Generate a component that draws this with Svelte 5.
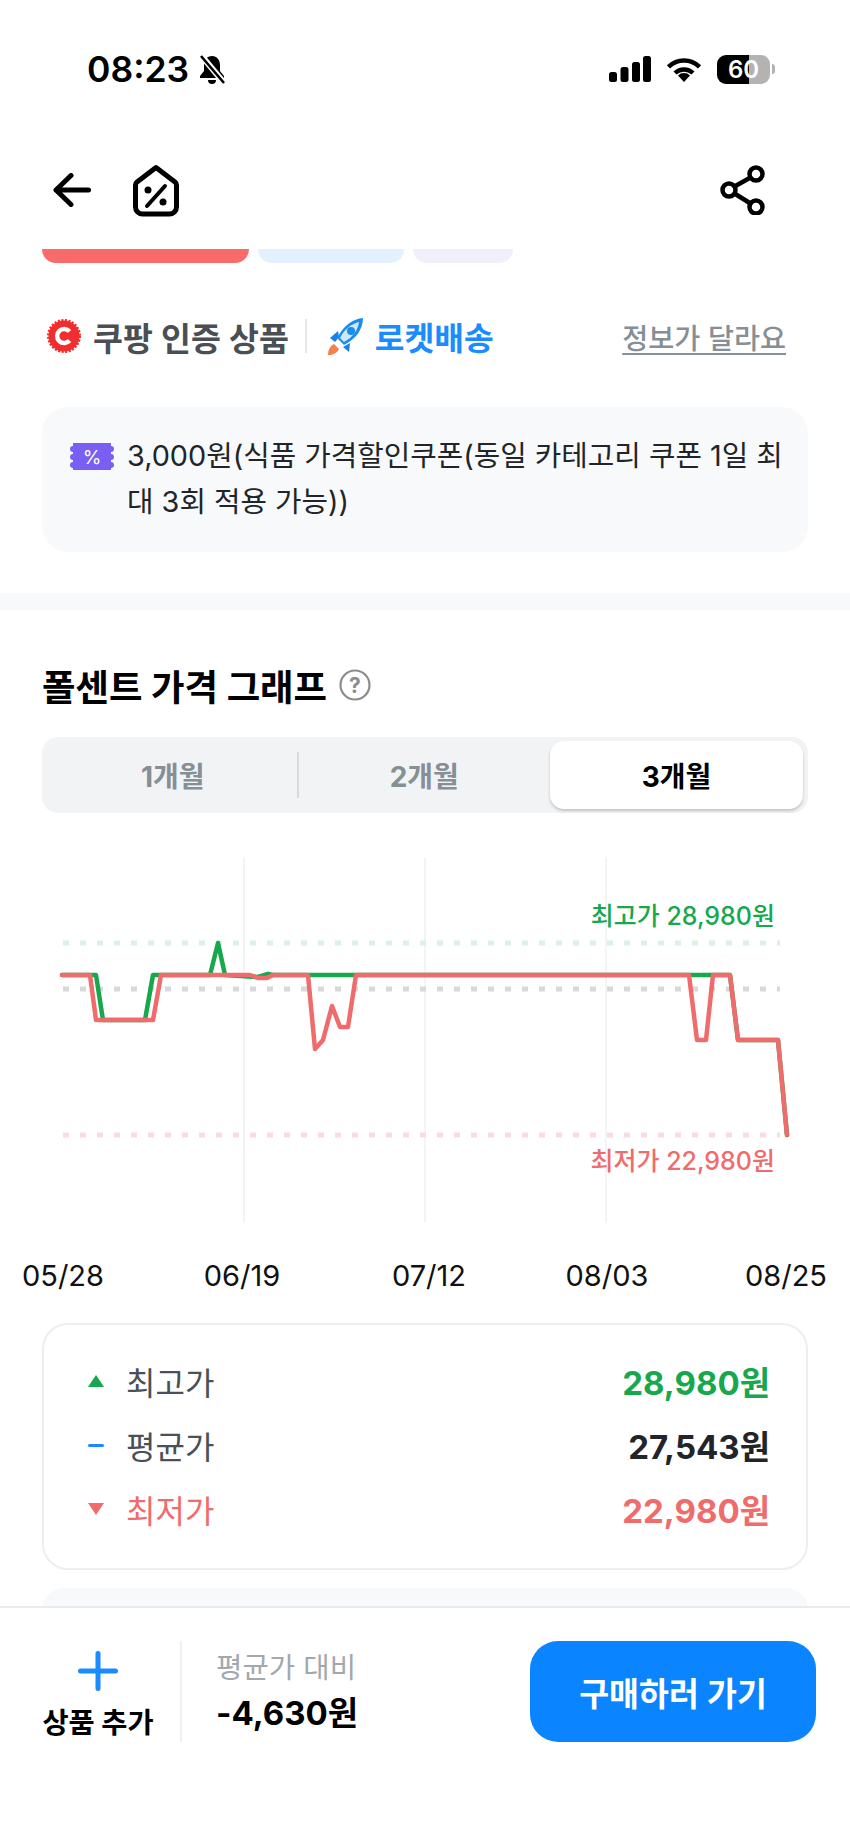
<script lang="ts">
	const labels = [
		{ x: 63, text: '05/28' },
		{ x: 242, text: '06/19' },
		{ x: 429, text: '07/12' },
		{ x: 607, text: '08/03' },
		{ x: 786, text: '08/25' }
	];
	const gridX = [244, 425, 606];
	const guides = [
		{ y: 943, color: '#dcf1e5' },
		{ y: 989, color: '#d9d9d9' },
		{ y: 1135, color: '#fbdcdc' }
	];
	const TOP = 857; // page y of the svg's top edge, so data can stay in page coords
	const high =
		'62,975 96,975 103,1020 145,1020 153,975 210,975 218,943 225,975 258,977 268,974 273,975 689,975 713,975 730,975 738,1040 778,1040 787,1135';
	const low =
		'62,975 90,975 96,1020 153,1020 161,975 250,975 258,978 267,978 273,975 308,975 315,1049 323,1040 332,1006 340,1027 348,1027 356,975 689,975 697,1040 706,1040 713,975 730,975 738,1040 778,1040 787,1135';

	const stats = [
		{ label: '최고가', value: '28,980원', kind: 'up' },
		{ label: '평균가', value: '27,543원', kind: 'avg' },
		{ label: '최저가', value: '22,980원', kind: 'down' }
	];
	const periods = ['1개월', '2개월', '3개월'];
</script>

<div class="screen">
	<div class="status">
		<div class="clock">
			<span>08:23</span>
			<svg class="bell" viewBox="0 0 30 32" width="30" height="32">
				<path d="M15 3c-5 0-8 4-8 9v6l-4 5v2h24v-2l-4-5v-6c0-5-3-9-8-9z" fill="#000" />
				<path d="M11 27a4 4 0 0 0 8 0z" fill="#000" />
				<path d="M3 1l25 30" stroke="#fff" stroke-width="6" />
				<path d="M4 3l23 27" stroke="#000" stroke-width="2.6" />
			</svg>
		</div>
		<div class="sys">
			<svg viewBox="0 0 42 26" width="42" height="26">
				<rect x="0" y="16" width="8" height="10" rx="2.5" />
				<rect x="11.500" y="11" width="8" height="15" rx="2.5" />
				<rect x="23" y="6" width="8" height="20" rx="2.5" />
				<rect x="34" y="0" width="8" height="26" rx="2.5" />
			</svg>
			<svg viewBox="0 0 34 25" width="34" height="25">
				<path d="M17 25l-6-6.500a8.500 8.500 0 0 1 12 0z" />
				<path d="M1.500 10a22 22 0 0 1 31 0" fill="none" stroke="#000" stroke-width="4.500" />
				<path d="M8 16a13 13 0 0 1 18 0" fill="none" stroke="#000" stroke-width="4.500" />
			</svg>
			<div class="battery">
				<div class="cell"><span>60</span></div>
				<i></i>
			</div>
		</div>
	</div>

	<div class="nav">
		<div class="nav-left">
			<svg viewBox="0 0 38 34" width="38" height="34" fill="none" stroke="#000" stroke-width="5" stroke-linecap="round" stroke-linejoin="round">
				<path d="M35.500 17H3M18 2.500L3 17l15 14.500" />
			</svg>
			<svg viewBox="0 0 50 54" width="50" height="54" fill="none" stroke="#000" stroke-width="5" stroke-linejoin="round" stroke-linecap="round">
				<path d="M25 4.500L6 19a4 4 0 0 0-1.500 3v22a7 7 0 0 0 7 7h27a7 7 0 0 0 7-7V22a4 4 0 0 0-1.500-3z" />
				<path d="M34 23L16 43" stroke-width="4" />
				<circle cx="17" cy="27" r="3.500" fill="#000" stroke="none" />
				<circle cx="32" cy="39" r="3.500" fill="#000" stroke="none" />
			</svg>
		</div>
		<svg viewBox="0 0 46 50" width="46" height="50" fill="none" stroke="#000" stroke-width="4.500">
			<circle cx="36" cy="9" r="6.500" />
			<circle cx="9" cy="25" r="6.500" />
			<circle cx="36" cy="42" r="6.500" />
			<path d="M30.500 12.500L14.500 21.500M14.500 28.500l16 10" />
		</svg>
	</div>

	<div class="scroll">
		<div class="bars">
			<div class="bar red"></div>
			<div class="bar blue"></div>
			<div class="bar violet"></div>
		</div>

		<div class="badges">
			<svg class="stamp" viewBox="0 0 34 34" width="34" height="34">
				<circle cx="17" cy="17" r="15.500" fill="#f22d2d" stroke="#f22d2d" stroke-width="3" stroke-dasharray="2 1.500" />
				<path d="M22.500 12.500a7 7 0 1 0 0 9" fill="none" stroke="#fff" stroke-width="4.500" />
			</svg>
			<span class="cert">쿠팡 인증 상품</span>
			<span class="vr"></span>
			<svg class="rocket" viewBox="0 0 37 38" width="37" height="38">
				<path d="M6 27C2 29 0 33 0 38c5 0 9-2 11-6z" fill="#f5814f" />
				<path d="M10 14L2 21l5 4 4-5zM22 26l-1 9-6-5z" fill="#1a7fe8" />
				<path d="M35 1C25 2 16 8 9 21l7 7c12-6 19-16 19-27z" fill="#1a8cf0" />
				<path d="M31 5c-7 2-14 6-19 16l4 4c9-5 14-12 15-20z" fill="#cfe7fb" />
				<circle cx="23" cy="14" r="4" fill="#1a8cf0" />
			</svg>
			<span class="rocket-text">로켓배송</span>
			<span class="report">정보가 달라요</span>
		</div>

		<div class="coupon">
			<svg class="ticket" viewBox="0 0 44 27" width="44" height="27">
				<path d="M3 0H41V3a3 3 0 0 1 0 6v2a3 3 0 0 1 0 6v2a3 3 0 0 1 0 6v2H3v-2a3 3 0 0 1 0-6v-2a3 3 0 0 1 0-6V9a3 3 0 0 1 0-6z" fill="#7a5ff5" />
				<text x="22" y="20.500" text-anchor="middle" fill="#fff" font-size="19" font-family="Inter, sans-serif">%</text>
			</svg>
			<p>3,000원(식품 가격할인쿠폰(동일 카테고리 쿠폰 1일 최대 3회 적용 가능))</p>
		</div>

		<div class="band"></div>

		<h2>
			폴센트 가격 그래프
			<svg viewBox="0 0 32 32" width="32" height="32">
				<circle cx="16" cy="16" r="14.500" fill="none" stroke="#8c8c8c" stroke-width="2.200" />
				<text x="16" y="23.500" text-anchor="middle" fill="#8c8c8c" font-size="21" font-family="Inter, sans-serif">?</text>
			</svg>
		</h2>

		<div class="segments">
			{#each periods as p, i}
				<div class="seg" class:on={i === 2} class:sep={i === 0}>{p}</div>
			{/each}
		</div>

		<svg class="chart" viewBox="0 {TOP} 850 436" width="850" height="436">
			{#each gridX as x}
				<line x1={x} x2={x} y1={TOP} y2="1223" stroke="#f3f4f6" stroke-width="2" />
			{/each}
			{#each guides as g}
				<line x1="63" x2="780" y1={g.y} y2={g.y} stroke={g.color} stroke-width="5" stroke-dasharray="6 11" />
			{/each}
			<polyline points={high} fill="none" stroke="#17a84d" stroke-width="4.500" stroke-linejoin="round" stroke-linecap="round" />
			<polyline points={low} fill="none" stroke="#f06b6b" stroke-width="4.500" stroke-linejoin="round" stroke-linecap="round" />
			<text class="tag green" x="775" y="925" text-anchor="end">최고가 28,980원</text>
			<text class="tag coral" x="775" y="1170" text-anchor="end">최저가 22,980원</text>
			{#each labels as l}
				<text class="tick" x={l.x} y="1286" text-anchor="middle">{l.text}</text>
			{/each}
		</svg>

		<div class="stats">
			{#each stats as s}
				<div class="stat {s.kind}">
					<i class="mark"></i>
					<span class="name">{s.label}</span>
					<b>{s.value}</b>
				</div>
			{/each}
		</div>

		<div class="next"></div>
	</div>

	<div class="footer">
		<div class="add">
			<svg viewBox="0 0 40 40" width="40" height="40">
				<path d="M20 2.500v35M2.500 20h35" stroke="#1a8cff" stroke-width="5" stroke-linecap="round" />
			</svg>
			<span>상품 추가</span>
		</div>
		<div class="compare">
			<span>평균가 대비</span>
			<b>-4,630원</b>
		</div>
		<button>구매하러 가기</button>
	</div>
</div>

<style>
	:global(body) {
		margin: 0;
		background: #fff;
	}
	.screen {
		width: 850px;
		height: 1848px;
		display: flex;
		flex-direction: column;
		overflow: hidden;
		color: #000;
		font-family: Inter, 'Noto Sans CJK KR', sans-serif;
	}

	.status {
		height: 54px;
		padding: 42px 75px 0 87px;
		display: flex;
		justify-content: space-between;
		align-items: center;
	}
	.clock {
		display: flex;
		align-items: center;
		gap: 8px;
		font-size: 35.5px;
		font-weight: 600;
	}
	.sys {
		display: flex;
		align-items: center;
		gap: 16px;
	}
	.battery {
		display: flex;
		align-items: center;
		gap: 2px;
	}
	.cell {
		width: 53px;
		height: 29px;
		border-radius: 9px;
		background: linear-gradient(90deg, #000 60%, #b3b3b3 60%);
		color: #fff;
		font-size: 24px;
		font-weight: 600;
		line-height: 29px;
		text-align: center;
	}
	.battery i {
		width: 3px;
		height: 10px;
		border-radius: 0 3px 3px 0;
		background: #b3b3b3;
	}

	.nav {
		height: 54px;
		padding: 67px 84px 0 53px;
		display: flex;
		justify-content: space-between;
		align-items: center;
	}
	.nav-left {
		display: flex;
		align-items: center;
		gap: 40px;
	}

	.scroll {
		flex: 1;
		min-height: 0;
		overflow: hidden;
		margin-top: 32px;
	}
	.bars {
		height: 14px;
		padding: 0 42px;
		display: flex;
		gap: 9px;
	}
	.bar {
		border-radius: 0 0 14px 14px;
	}
	.red {
		width: 207px;
		background: #f96a6a;
	}
	.blue {
		width: 146px;
		background: #e3f1fe;
	}
	.violet {
		width: 100px;
		background: #f1effc;
	}

	.badges {
		margin-top: 53px;
		height: 40px;
		padding: 0 64px 0 47px;
		display: flex;
		align-items: center;
	}
	.cert {
		margin-left: 12px;
		font-size: 32.5px;
		font-weight: 600;
		color: #4a4f55;
	}
	.vr {
		width: 2px;
		height: 34px;
		margin: 0 21px 0 16px;
		background: #e6e8ea;
	}
	.rocket-text {
		margin-left: 10px;
		font-size: 32.3px;
		font-weight: 700;
		color: #1a8cff;
	}
	.report {
		margin-left: auto;
		font-size: 28.3px;
		font-weight: 500;
		color: #868e96;
		text-decoration: underline;
		text-underline-offset: 4px;
	}

	.coupon {
		margin: 51px 42px 0;
		height: 145px;
		box-sizing: border-box;
		padding: 26px 24px 0 28px;
		display: flex;
		gap: 13px;
		align-items: flex-start;
		background: #f8f9fa;
		border-radius: 26px;
	}
	.ticket {
		flex: none;
		margin-top: 10px;
	}
	.coupon p {
		margin: 0;
		font-size: 28.8px;
		line-height: 46px;
		color: #212529;
	}

	.band {
		margin-top: 41px;
		height: 17px;
		background: #f8f9fa;
	}

	h2 {
		margin: 52px 42px 0;
		height: 46px;
		display: flex;
		align-items: center;
		gap: 12px;
		font-size: 36.4px;
		font-weight: 700;
	}

	.segments {
		margin: 29px 42px 0;
		height: 76px;
		box-sizing: border-box;
		padding: 4px 5px;
		display: grid;
		grid-template-columns: 1fr 1fr 253px;
		background: #f1f3f5;
		border-radius: 16px;
	}
	.seg {
		position: relative;
		display: flex;
		align-items: center;
		justify-content: center;
		font-size: 28px;
		font-weight: 700;
		color: #868e96;
	}
	.sep::after {
		content: '';
		position: absolute;
		right: 0;
		top: 11px;
		bottom: 11px;
		width: 2px;
		background: #d6d9dd;
	}
	.on {
		color: #000;
		background: #fff;
		border-radius: 14px;
		box-shadow: 0 2px 3px rgba(0, 0, 0, 0.2);
	}

	.chart {
		display: block;
		margin-top: 44px;
	}
	.tag {
		font-size: 25px;
		font-weight: 500;
	}
	.green {
		fill: #17a84d;
	}
	.coral {
		fill: #f06b6b;
	}
	.tick {
		font-size: 29px;
		fill: #111;
	}

	.stats {
		margin: 30px 42px 0;
		height: 247px;
		box-sizing: border-box;
		padding: 24px 36px 0 44px;
		border: 2px solid #eceef0;
		border-radius: 26px;
	}
	.stat {
		height: 64px;
		display: flex;
		align-items: center;
		font-size: 32px;
		color: #495057;
	}
	.stat b {
		margin-left: auto;
		font-size: 33px;
		font-weight: 700;
		color: #212529;
	}
	.name {
		margin-left: 22px;
	}
	.mark {
		width: 16px;
		height: 12px;
	}
	.up .mark {
		background: #17a84d;
		clip-path: polygon(50% 0, 100% 100%, 0 100%);
	}
	.avg .mark {
		height: 3px;
		background: #1a8cff;
		border-radius: 2px;
	}
	.down .mark {
		background: #f06b6b;
		clip-path: polygon(0 0, 100% 0, 50% 100%);
	}
	.up b {
		color: #17a84d;
	}
	.down .name,
	.down b {
		color: #f06b6b;
	}

	.next {
		margin: 18px 42px 0;
		height: 120px;
		background: #f8f9fa;
		border-radius: 22px;
	}

	.footer {
		height: 242px;
		box-sizing: border-box;
		padding: 33px 34px 0 42px;
		display: flex;
		align-items: flex-start;
		background: #fff;
		border-top: 2px solid #e9ecef;
	}
	.add {
		width: 112px;
		padding-top: 10px;
		display: flex;
		flex-direction: column;
		align-items: center;
		gap: 14px;
		font-size: 28.4px;
		font-weight: 700;
		line-height: 36px;
		white-space: nowrap;
	}
	.compare {
		height: 101px;
		box-sizing: border-box;
		margin-left: 26px;
		padding: 7px 0 0 34px;
		border-left: 2px solid #eef0f2;
		display: flex;
		flex-direction: column;
		gap: 2px;
	}
	.compare span {
		font-size: 28.7px;
		line-height: 40px;
		color: #a3a8ad;
	}
	.compare b {
		font-size: 33px;
		line-height: 46px;
		font-weight: 700;
	}
	button {
		margin-left: auto;
		width: 286px;
		height: 101px;
		border: 0;
		border-radius: 28px;
		background: #0a84ff;
		color: #fff;
		font: 600 32.5px Inter, 'Noto Sans CJK KR', sans-serif;
	}
</style>
